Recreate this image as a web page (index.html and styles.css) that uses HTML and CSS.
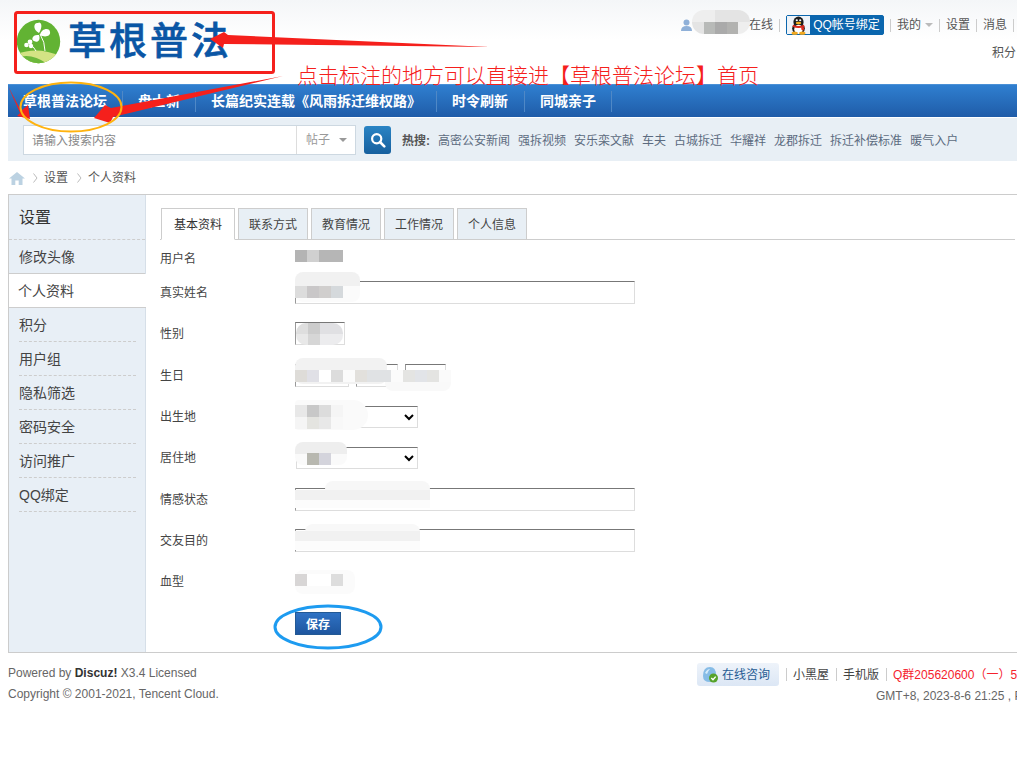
FILE: index.html
```html
<!DOCTYPE html>
<html lang="zh-CN">
<head>
<meta charset="utf-8">
<title>个人资料 - 草根普法论坛</title>
<link rel="stylesheet" href="styles.css">
</head>
<body>
<div class="page">
  <header class="head">
    <div class="logo">
      <svg class="logo-mark" width="44" height="46" viewBox="0 0 44 46">
        <defs><clipPath id="c"><circle cx="21.5" cy="23.500" r="21.7"/></clipPath></defs>
        <circle cx="21.5" cy="23.500" r="21.7" fill="#62b333"/>
        <g clip-path="url(#c)">
          <path d="M0 36 Q20 28 44 38 V46 H0Z" fill="#d3e384"/>
          <path d="M0 40 Q14 34 32 47 H0Z" fill="#6cb83c"/>
        </g>
        <g fill="#fff">
          <path d="M22 15 C15 11 17 4 21 5 C23 3 27 7 22 15Z"/>
          <path d="M23 17 C24 10 33 9 33 14 C34 18 28 20 23 17Z"/>
          <path d="M22 17 C15 16 14 22 17 23 C20 25 24 23 22 17Z"/>
          <circle cx="13" cy="24" r="2.400"/><circle cx="9.500" cy="27" r="2.300"/><circle cx="14" cy="28" r="2.200"/>
        </g>
        <path d="M23 16 Q28 24 28 33 M12 27 Q17 28 19 33" fill="none" stroke="#fff" stroke-width="1"/>
      </svg>
      <span class="logo-text">草根普法</span>
    </div>
    <div class="user">
      <div class="user-links">
        <svg class="user-ico" width="11" height="12" viewBox="0 0 11 12"><circle cx="5.5" cy="3.500" r="3" fill="#8fb0d8"/><path d="M0 12 Q0 7 5.500 7 Q11 7 11 12Z" fill="#8fb0d8"/></svg>
        <span class="user-name"></span>
        <span class="ulink">在线</span><i class="pipe"></i>
        <span class="qq">
          <span class="qq-ico">
            <svg width="17" height="19" viewBox="0 0 20 22">
              <ellipse cx="10" cy="7" rx="6" ry="6.500" fill="#1d1d1d"/>
              <ellipse cx="10" cy="14.500" rx="7.500" ry="6.500" fill="#1d1d1d"/>
              <ellipse cx="10" cy="15.500" rx="5" ry="5.500" fill="#fff"/>
              <path d="M3.500 10 Q10 13 16.500 10 L17 12.500 Q10 15.500 3 12.500Z" fill="#dc2a1c"/>
              <path d="M13 13 L17 13 L16 17 L13.500 16Z" fill="#dc2a1c"/>
              <ellipse cx="10" cy="8" rx="3.200" ry="1.500" fill="#f4b21e"/>
              <circle cx="8" cy="4.800" r="1.300" fill="#fff"/><circle cx="12" cy="4.800" r="1.300" fill="#fff"/>
              <ellipse cx="5.500" cy="20" rx="3.600" ry="1.800" fill="#f4a91e"/><ellipse cx="14.500" cy="20" rx="3.600" ry="1.800" fill="#f4a91e"/>
            </svg>
          </span>
          <span class="qq-text">QQ帐号绑定</span>
        </span><i class="pipe"></i>
        <span class="ulink">我的</span><i class="caret"></i><i class="pipe"></i>
        <span class="ulink">设置</span><i class="pipe"></i>
        <span class="ulink">消息</span><i class="pipe"></i>
      </div>
      <div class="user-credit">积分</div>
    </div>
  </header>

  <nav class="nav">
    <a class="nav-item">草根普法论坛</a>
    <a class="nav-item">盘士新</a>
    <a class="nav-item">长篇纪实连载《风雨拆迁维权路》</a>
    <a class="nav-item nav-now">时令刷新</a>
    <a class="nav-item">同城亲子</a>
  </nav>

  <div class="search">
    <div class="search-box">
      <span class="search-input">请输入搜索内容</span>
      <span class="search-type">帖子<i class="search-caret"></i></span>
    </div>
    <span class="search-btn">
      <svg width="16" height="16" viewBox="0 0 16 16"><circle cx="6.700" cy="6.700" r="4.600" fill="none" stroke="#fff" stroke-width="2.200"/><path d="M10 10 L14.300 14.300" stroke="#fff" stroke-width="2.600" stroke-linecap="round"/></svg>
    </span>
    <div class="hot">
      <strong>热搜:</strong>
      <a>高密公安新闻</a><a>强拆视频</a><a>安乐栾文献</a><a>车夫</a><a>古城拆迁</a><a>华耀祥</a><a>龙郡拆迁</a><a>拆迁补偿标准</a><a>暖气入户</a>
    </div>
  </div>

  <div class="crumb">
    <svg width="16" height="13" viewBox="0 0 16 13"><path d="M8 0 L16 6.500 H13.500 V13 H9.700 V8.500 H6.300 V13 H2.500 V6.500 H0Z" fill="#bcd2e2"/></svg>
    <svg class="chev chev-first" width="5" height="10" viewBox="0 0 5 10"><path d="M.5 .5 L4 5 L.5 9.500" fill="none" stroke="#bbb"/></svg>
    <span>设置</span>
    <svg class="chev" width="5" height="10" viewBox="0 0 5 10"><path d="M.5 .5 L4 5 L.5 9.500" fill="none" stroke="#bbb"/></svg>
    <span>个人资料</span>
  </div>

  <main class="panel">
    <aside class="side">
      <h2 class="side-title">设置</h2>
      <a class="side-item side-first">修改头像</a>
      <a class="side-item side-on">个人资料</a>
      <a class="side-item">积分</a>
      <a class="side-item">用户组</a>
      <a class="side-item">隐私筛选</a>
      <a class="side-item">密码安全</a>
      <a class="side-item">访问推广</a>
      <a class="side-item">QQ绑定</a>
    </aside>
    <section class="content">
      <div class="tabs">
        <a class="tab tab-on">基本资料</a>
        <a class="tab">联系方式</a>
        <a class="tab">教育情况</a>
        <a class="tab">工作情况</a>
        <a class="tab">个人信息</a>
      </div>
      <div class="form">
        <div class="row row-first"><label>用户名</label><div class="val"></div></div>
        <div class="row"><label>真实姓名</label><div class="val"><span class="field"></span></div></div>
        <div class="row"><label>性别</label><div class="val"><span class="field field-sex"></span></div></div>
        <div class="row"><label>生日</label><div class="val"><span class="field field-y"></span><span class="field field-m"></span><span class="field field-d"></span></div></div>
        <div class="row"><label>出生地</label><div class="val"><select class="sel"><option></option></select></div></div>
        <div class="row"><label>居住地</label><div class="val"><select class="sel"><option></option></select></div></div>
        <div class="row"><label>情感状态</label><div class="val"><span class="field"></span></div></div>
        <div class="row"><label>交友目的</label><div class="val"><span class="field"></span></div></div>
        <div class="row"><label>血型</label><div class="val"></div></div>
        <div class="row row-save"><label></label><div class="val"><button class="save">保存</button></div></div>
      </div>
    </section>
  </main>

  <footer class="foot">
    <div class="foot-left">
      <p>Powered by <strong>Discuz!</strong> X3.4 Licensed</p>
      <p>Copyright © 2001-2021, Tencent Cloud.</p>
    </div>
    <div class="foot-right">
      <div class="foot-links">
        <span class="consult">
          <svg width="17" height="17" viewBox="0 0 17 17"><path d="M1 10 Q1 1 8 1 Q14 1 14 9 Q15 15 8 16 Q1 16 1 10Z" fill="#86bce6"/><path d="M3 7 Q5 3 8 3 Q6 5 5 8Z" fill="#d6ebfa"/><circle cx="11.500" cy="12" r="4.500" fill="#55a32a"/><path d="M9.300 12 L11 13.800 L13.700 10.600" fill="none" stroke="#fff" stroke-width="1.400"/></svg>
          在线咨询
        </span><i class="pipe pipe-foot"></i>
        <span>小黑屋</span><i class="pipe pipe-foot"></i>
        <span>手机版</span><i class="pipe pipe-foot"></i>
        <span class="qgroup">Q群205620600（一）5</span>
      </div>
      <p class="foot-time">GMT+8, 2023-8-6 21:25 , Processed in 0.1 second(s)</p>
    </div>
  </footer>
</div>

<!-- mosaics covering private values -->
<div class="blur b-name"></div>
<div class="blur b1"></div><div class="blur b2"></div>
<div class="blur b3"></div><div class="blur b3b"></div>
<div class="blur b4"></div><div class="blur b5"></div>
<div class="blur b6"></div><div class="blur b6b"></div>
<div class="blur b7"></div><div class="blur b7b"></div>
<div class="blur b8"></div>
<div class="pix p1"></div><div class="pix p2"></div><div class="pix p3"></div><div class="pix p4"></div><div class="pix p4b"></div><div class="pix p5"></div><div class="pix p6"></div>

<!-- hand-drawn annotations -->
<svg class="marks" width="1017" height="764" viewBox="0 0 1017 764">
  <rect x="15.500" y="12.500" width="258" height="60" rx="2" fill="none" stroke="#f5201c" stroke-width="3"/>
  <path d="M490 47 L228 35 L224 32 L210 39 L223 48 L224 44Z" fill="#f5201c"/>
  <path d="M283 76 L111 108 L105 105 L94 118 L110 123 L113 117Z" fill="#f5201c"/>
  <path d="M8 86 L21 111 L28 105 L30 119 L17 116 L20 113Z" fill="#f5201c"/>
  <ellipse cx="71" cy="107" rx="50.500" ry="24.500" fill="none" stroke="#ffb30f" stroke-width="2"/>
  <ellipse cx="328" cy="627" rx="53" ry="21" fill="none" stroke="#1d9bf0" stroke-width="3"/>
</svg>
<div class="note">点击标注的地方可以直接进【草根普法论坛】首页</div>
</body>
</html>
```
FILE: styles.css
```css
* { box-sizing: border-box; }
html, body { margin: 0; padding: 0; }
body {
  width: 1017px;
  height: 764px;
  overflow: hidden;
  position: relative;
  background: #fff;
  font: 12px/1.5 "Liberation Sans", "Noto Sans CJK SC", sans-serif;
  color: #444;
}
p { margin: 0; }
i { font-style: normal; }

.page { width: 1260px; padding: 0 0 0 8px; background: linear-gradient(#f4f6f8, #fff 40px) no-repeat; background-size: 100% 40px; }

/* header */
.head { height: 84px; display: flex; position: relative; }
.logo { width: 672px; padding: 18px 0 0 9px; display: flex; align-items: flex-start; gap: 7px; }
.logo-text { font-size: 38px; line-height: 46px; letter-spacing: 3px; font-weight: 500; color: #0a56a5; white-space: nowrap; -webkit-text-stroke: .6px #0a56a5; }
.user { flex: none; width: 580px; padding-top: 15px; }
.user-links { height: 20px; display: flex; align-items: center; }
.user-ico { margin-left: 1px; }
.user-name { width: 57px; }
.ulink { color: #555; }
.pipe { width: 1px; height: 13px; background: #ccc; margin: 0 6px; }
.qq { display: flex; width: 98px; height: 20px; border: 1px solid #0b66ad; border-radius: 2px; background: #0a66ae; color: #fff; }
.qq-ico { width: 23px; background: #eef3f8; display: flex; align-items: center; justify-content: center; }
.qq-text { flex: 1; text-align: center; line-height: 18px; }
.caret { width: 0; height: 0; border: 4px solid transparent; border-top: 4px solid #bbb; border-bottom: 0; margin-left: 4px; }
.user-credit { padding: 9px 0 0 312px; color: #555; }

/* nav */
.nav { height: 33px; display: flex; background: linear-gradient(#2f7fd0, #1f5ca8); border-top: 1px solid #4a90d6; padding-top: 6px; }
.nav-item {
  height: 21px; line-height: 21px; padding: 0 15px;
  font-size: 14px; font-weight: 700; color: #fff;
  border-right: 1px solid #4f88c6;
}
.nav-item:nth-child(4) { padding-right: 16px; }

/* search */
.search { margin-top: 1px; height: 43px; background: #e8eff5; display: flex; align-items: center; padding-left: 15px; }
.search-box { width: 333px; height: 30px; display: flex; background: #fff; border: 1px solid #cdd8e1; }
.search-input { width: 272px; padding-left: 8px; line-height: 31px; color: #888; }
.search-type { flex: 1; border-left: 1px solid #ddd; padding: 1px 0 0 9px; line-height: 28px; color: #999; display: flex; align-items: center; }
.search-caret { width: 0; height: 0; border: 4px solid transparent; border-top: 4px solid #999; border-bottom: 0; margin-left: 9px; }
.search-btn { width: 27px; height: 28px; margin-left: 8px; border-radius: 3px; background: linear-gradient(#2a84c4, #17609e); display: flex; align-items: center; justify-content: center; }
.hot { margin-left: 11px; padding-top: 2px; white-space: nowrap; color: #555; display: flex; }
.hot strong { width: 36px; }
.hot a { margin-right: 8px; color: #5c6b80; }

/* breadcrumb */
.crumb { height: 33px; display: flex; align-items: center; color: #555; padding: 1px 0 0 1px; }
.chev { margin: 0 6px 0 9px; }
.chev-first { margin-left: 8px; }

/* panel */
.panel { display: flex; height: 459px; border: 1px solid #ccc; }
.side { width: 137px; flex: none; background: #e8eff6; border-right: 1px solid #d6dfe8; }
.side-title { margin: 0; height: 45px; line-height: 45px; padding-left: 10px; font-size: 16px; font-weight: 400; color: #333; border-bottom: 1px dashed #cdcdcd; }
.side-item { display: block; height: 34px; line-height: 35px; margin: 0 9px 0 10px; font-size: 14px; border-bottom: 1px dashed #cdcdcd; color: #444; }
.side-first { margin: 0; padding-left: 10px; border-bottom: 1px solid #cdcdcd; }
.side-on { margin: 0 -1px 0 0; padding-left: 9px; background: #fff; border-bottom: 1px solid #cdcdcd; position: relative; }
.content { flex: 1; padding: 13px 0 0 14px; }
.tabs { display: flex; gap: 3px; height: 32px; width: 855px; border-bottom: 1px solid #cdcdcd; padding-left: 1px; }
.tab { width: 70px; height: 32px; line-height: 33px; text-align: center; background: #e8eff5; border: 1px solid #cdcdcd; color: #444; }
.tab-on { width: 74px; background: #fff; border-bottom-color: #fff; color: #333; }

/* form */
.form { display: grid; grid-template-columns: 135px 1fr; }
.row { display: grid; grid-template-columns: subgrid; grid-column: 1 / 3; height: 41.300px; align-items: center; }
.row-first { height: 32px; }
.row label { color: #444; padding-top: 1px; }
.row-first label { padding-top: 6px; }
.val { display: flex; align-items: center; gap: 7px; }
.field { display: block; width: 340px; height: 23px; background: #fff; border: 1px solid #ddd; border-top-color: #777; border-left-color: #999; }
.field-sex { width: 50px; }
.field-y { width: 54px; }
.field-m { width: 42px; }
.field-d { width: 41px; }
.sel { width: 122px; height: 22px; margin: 0 0 0 1px; background: #fff; border: 1px solid #ddd; border-top-color: #777; font: inherit; }
.save { width: 46px; height: 23px; padding: 0; border: 1px solid #235994; background: linear-gradient(#2f72c4, #1e569f); color: #fff; font: 700 12px "Liberation Sans", "Noto Sans CJK SC", sans-serif; }

/* footer */
.foot { display: flex; padding-top: 10px; }
.foot-left { width: 689px; }
.foot-left p { line-height: 21px; color: #666; }
.foot-left strong { color: #333; }
.foot-right { flex: 1; }
.foot-links { display: flex; align-items: center; height: 23px; white-space: nowrap; }
.consult { width: 82px; height: 23px; display: flex; align-items: center; gap: 3px; padding-left: 5px; border-radius: 3px; background: linear-gradient(#eef3fa, #dce7f5); color: #1f5b93; }
.pipe-foot { margin: 0 6px 0 7px; }
.qgroup { color: #f5222d; }
.foot-time { padding: 1px 0 0 179px; color: #666; white-space: nowrap; }

/* overlays */
.blur { position: absolute; background: #fbfbfb; border-radius: 8px; }
.b-name { left: 692px; top: 10px; width: 58px; height: 24px; border-radius: 12px;
  background: linear-gradient(90deg, #e4e4e4 20%, #b8bab8 20% 40%, #aaa 40% 60%, #b2b2b0 60% 80%, #eee 80%) bottom / 100% 50% no-repeat,
              linear-gradient(90deg, #eee 40%, #e4e4e4 40%) top / 100% 50% no-repeat; }
.b1 { left: 295px; top: 272px; width: 65px; height: 30px; background: linear-gradient(#f1f1f1 14px, #fbfbfb 14px); }
.b2 { left: 296px; top: 323px; width: 47px; height: 22px; border-radius: 10px;
  background: linear-gradient(90deg, #dedede 25%, #ccc 25% 50%, #e0e0e3 50%) top / 100% 50% no-repeat,
              linear-gradient(90deg, #e8e8e8 25%, #d6d6d6 25% 50%, #ececee 50%) bottom / 100% 50% no-repeat; }
.b3 { left: 295px; top: 358px; width: 92px; height: 26px; background: #f2f2f2; }
.b3b { left: 385px; top: 370px; width: 66px; height: 21px; background: #f9f9f9; }
.b4 { left: 295px; top: 400px; width: 73px; height: 30px; background: #fafafa; border-radius: 4px 16px 16px 4px; }
.b5 { left: 295px; top: 442px; width: 52px; height: 23px; background: linear-gradient(#eee 12px, #fafafa 12px); }
.b6 { left: 325px; top: 481px; width: 105px; height: 18px; background: #f7f7f7; }
.b6b { left: 295px; top: 490px; width: 135px; height: 18px; background: linear-gradient(#f1f1f1 10px, #fcfcfc 10px); border-radius: 0; }
.b7 { left: 305px; top: 524px; width: 115px; height: 16px; background: #f8f8f8; }
.b7b { left: 295px; top: 531px; width: 125px; height: 19px; background: linear-gradient(#f1f1f1 10px, #fcfcfc 10px); border-radius: 0; }
.b8 { left: 295px; top: 570px; width: 60px; height: 24px; }
.pix { position: absolute; }
.p1 { left: 295px; top: 250px; width: 48px; height: 12px; background: linear-gradient(90deg, #b4b4b4 25%, #d0d0d0 25% 50%, #b6b6b6 50%); }
.p2 { left: 295px; top: 286px; width: 48px; height: 12px; background: linear-gradient(90deg, #dcdcdc 25%, #c9c7c8 25% 50%, #d0cecd 50% 75%, #d5d9dc 75%); }
.p3 { left: 295px; top: 370px; width: 156px; height: 12px; background: linear-gradient(90deg, #dedcd8 12px, #e0e0e6 12px 24px, #fff 24px 36px, #dcdcdc 36px 48px, #fbfbfb 48px 60px, #e2e0dc 60px 72px, #e0e2e4 72px 96px, #fbfbfb 96px 108px, #e4e4e2 108px 120px, #e2e4e8 120px 132px, #e4e4e2 132px 144px, #fafafa 144px); }
.p4 { left: 295px; top: 405px; width: 48px; height: 12px; background: linear-gradient(90deg, #e8e8e8 25%, #c8c8c8 25% 50%, #dcdcdc 50% 75%, #f5f5f5 75%); }
.p4b { left: 295px; top: 417px; width: 48px; height: 12px; background: linear-gradient(90deg, #f5f5f5 25%, #e4e4e0 25% 50%, #e8e8e8 50% 75%, #f8f8f8 75%); }
.p5 { left: 307px; top: 453px; width: 24px; height: 12px; background: linear-gradient(90deg, #b8b8b0 50%, #d4d4dc 50%); }
.p6 { left: 295px; top: 574px; width: 48px; height: 12px; background: linear-gradient(90deg, #d8d6d6 25%, #fff 25% 75%, #ddd 75%); }

.marks { position: absolute; left: 0; top: 0; pointer-events: none; }
.note { position: absolute; left: 297px; top: 58px; font: 21px/32px "Noto Sans CJK SC", sans-serif; font-weight: 300; color: #f5201c; white-space: nowrap; }
```
